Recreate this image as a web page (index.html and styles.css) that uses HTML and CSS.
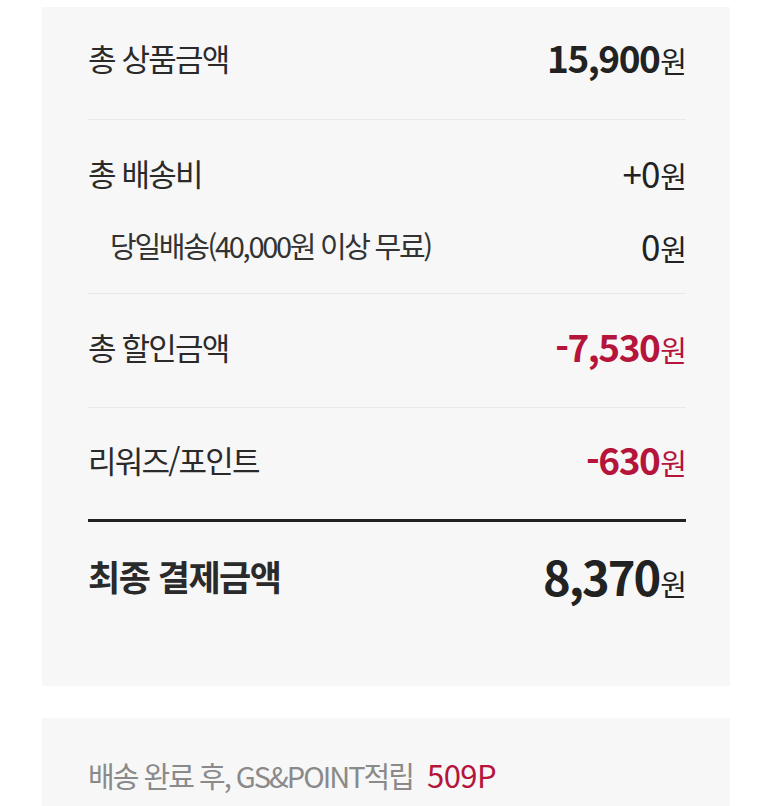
FILE: index.html
```html
<!DOCTYPE html>
<html lang="ko">
<head>
<meta charset="utf-8">
<link rel="stylesheet" href="styles.css">
</head>
<body>
<div class="card summary">
  <div class="section s1">
    <div class="row"><span class="label">총 상품금액</span><span class="amount"><b>15,900</b><i>원</i></span></div>
  </div>
  <div class="section s2">
    <div class="row"><span class="label">총 배송비</span><span class="amount"><b class="plain">+0</b><i>원</i></span></div>
    <div class="row sub"><span class="label">당일배송(40,000원 이상 무료)</span><span class="amount"><b class="plain">0</b><i>원</i></span></div>
  </div>
  <div class="section s3">
    <div class="row"><span class="label">총 할인금액</span><span class="amount red"><b>-7,530</b><i>원</i></span></div>
  </div>
  <div class="section s4">
    <div class="row"><span class="label">리워즈/포인트</span><span class="amount red"><b>-630</b><i>원</i></span></div>
  </div>
  <div class="total">
    <div class="row"><span class="label">최종 결제금액</span><span class="amount"><b>8,370</b><i>원</i></span></div>
  </div>
</div>
<div class="card note">
  <p class="note-text">배송 완료 후, GS&amp;POINT적립<span class="points">509P</span></p>
</div>
</body>
</html>
```

FILE: styles.css
```css
* { box-sizing: border-box; }
html, body { margin: 0; padding: 0; background: #fff; }
body {
  font-family: "Noto Sans CJK KR", "Noto Sans", sans-serif;
  color: #222;
  padding-top: 7px;
}
.card {
  background: #f7f7f7;
  margin: 0 43px 0 42px;
  padding: 0 44px 0 46px;
}
.section {
  border-bottom: 1px solid #e9e9e9;
}
.s1 { padding: 30px 0 42px; }
.s2 { padding: 32px 0 28px; display: flex; flex-direction: column; gap: 33px; }
.s3 { padding: 32px 0 41px; }
.s4 { padding: 31px 0 40px; border-bottom: 3px solid #222; }
.total { padding: 31px 0 89px; }
.row {
  display: flex;
  justify-content: space-between;
  align-items: center;
  height: 40px;
}
.label {
  font-size: 31px;
  letter-spacing: -1.8px;
  color: #2a2a2a;
}
.sub .label {
  font-size: 29px;
  letter-spacing: -2.3px;
  padding-left: 22px;
  color: #333;
}
.amount { display: flex; align-items: baseline; }
.amount b {
  font-size: 37px;
  font-weight: 700;
  letter-spacing: -1.5px;
}
.amount b.plain { font-weight: 400; font-size: 35px; letter-spacing: -1px; }
.amount i {
  font-style: normal;
  font-size: 29px;
  letter-spacing: -1px;
  margin-left: 1px;
}
.red { color: #b5143b; }
.total .row { height: 44px; }
.total .label { font-size: 35px; font-weight: 700; letter-spacing: -1.5px; }
.total .amount b { font-size: 47px; font-weight: 700; letter-spacing: -2px; }
.total .amount i { font-size: 29px; }
.note {
  margin-top: 32px;
  padding-top: 37px;
  padding-bottom: 23px;
}
.note-text {
  margin: 0;
  font-size: 29px;
  letter-spacing: -2px;
  color: #8a8a8a;
  line-height: 40px;
}
.points {
  color: #b5143b;
  margin-left: 14px;
  font-size: 31px;
  letter-spacing: -0.5px;
}
```
